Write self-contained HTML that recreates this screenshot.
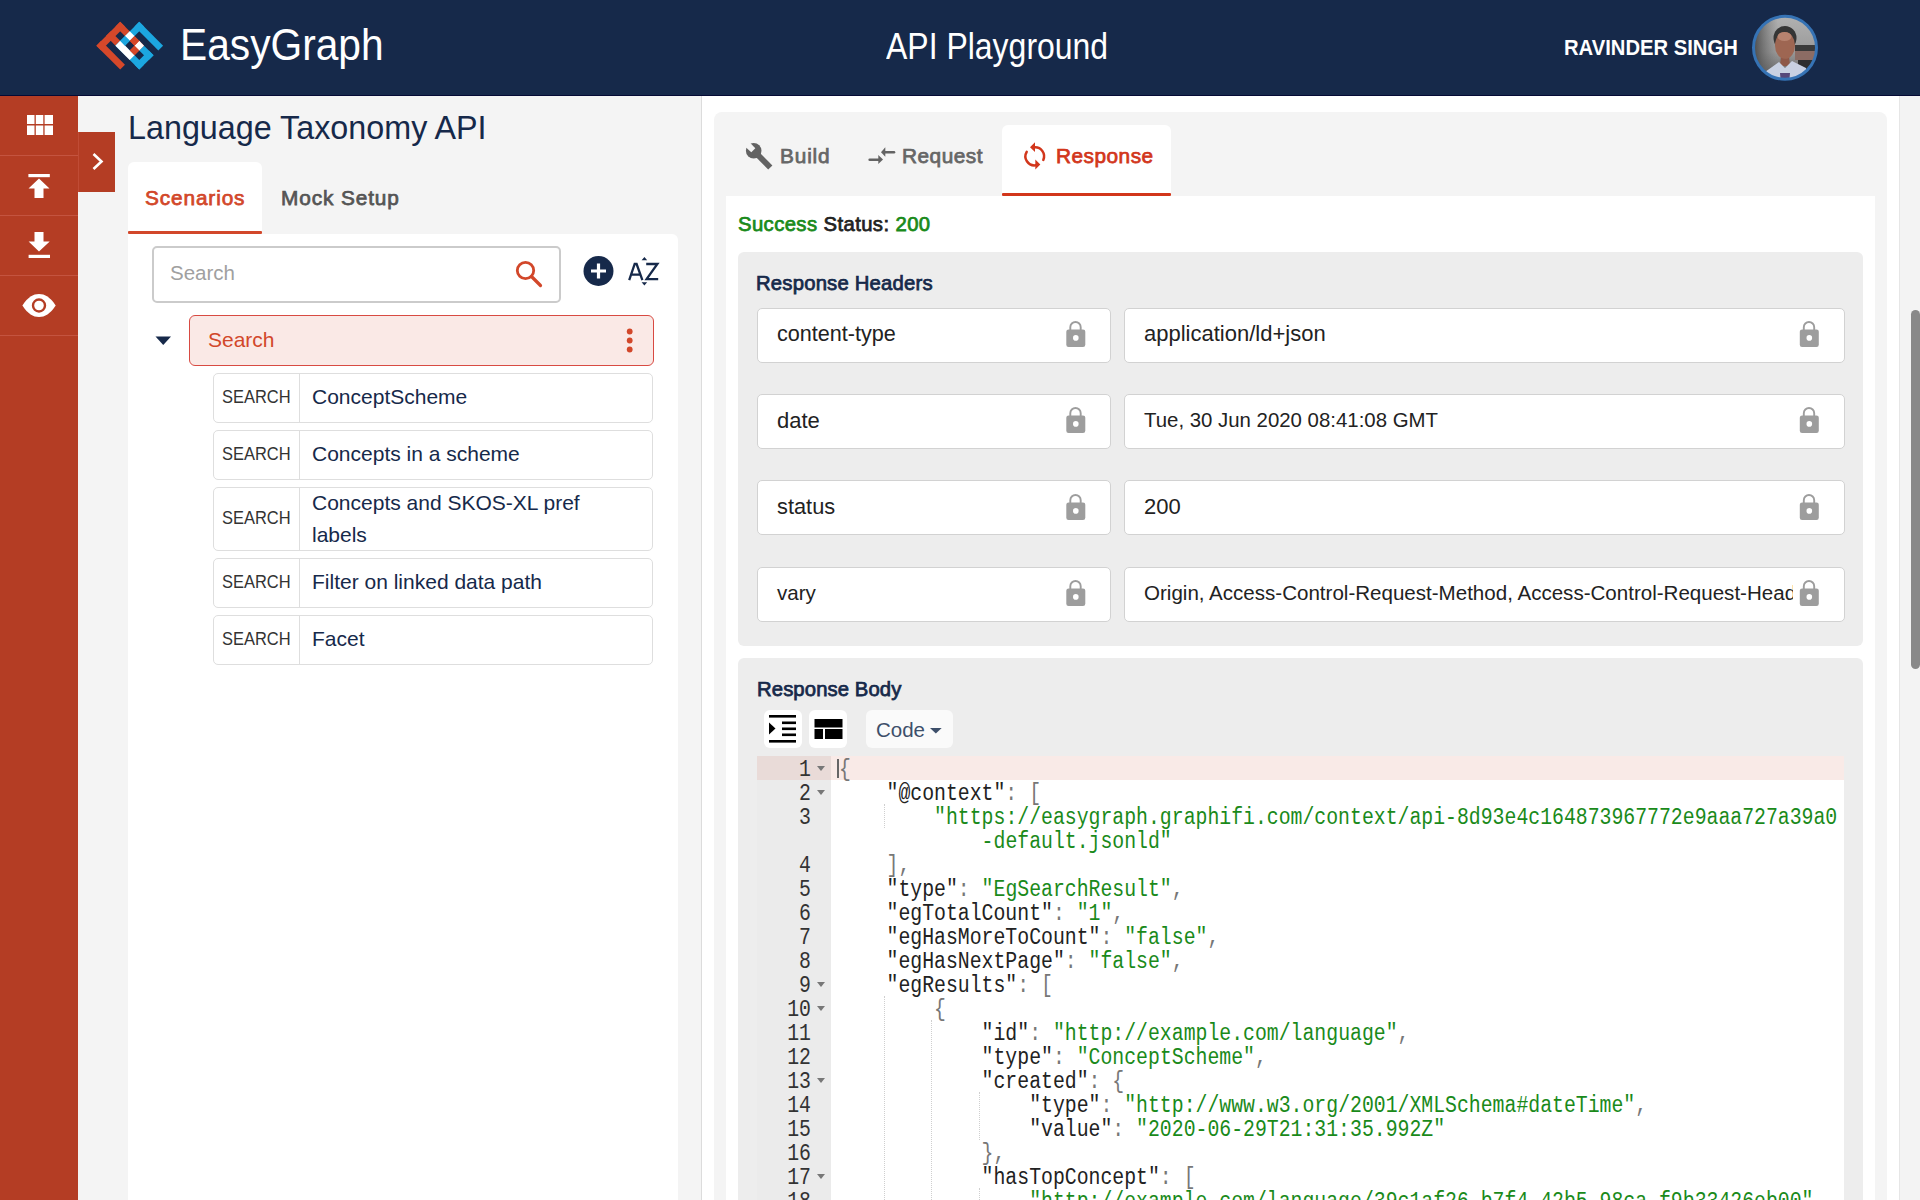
<!DOCTYPE html>
<html><head><meta charset="utf-8">
<style>
*{box-sizing:border-box;margin:0;padding:0}
html,body{width:1920px;height:1200px;overflow:hidden;background:#f4f4f4;font-family:"Liberation Sans",sans-serif}
.abs{position:absolute}
#hdr{left:0;top:0;width:1920px;height:96px;background:#16294a;border-bottom:1px solid #050a35}
#side{left:0;top:96px;width:78px;height:1104px;background:#b43d24}
.sdiv{position:absolute;left:0;width:78px;height:1px;background:#c45440}
#chev{left:78px;top:132px;width:37px;height:60px;background:#b43d24;border-left:1px solid #c04c36}
.txt{position:absolute;white-space:nowrap;line-height:1}
#leftwhite{left:128px;top:234px;width:550px;height:966px;background:#fff;border-top-right-radius:6px}
#scentab{left:128px;top:162px;width:134px;height:72px;background:#fff;border-radius:6px 6px 0 0}
#scenline{left:128px;top:231px;width:134px;height:3.2px;background:#d2472a;border-radius:1px}
#sinput{left:152px;top:246px;width:409px;height:57px;border:2px solid #cbcbcb;border-radius:5px;background:#fff}
#selitem{left:189px;top:315px;width:465px;height:51px;border:1.5px solid #d84a42;border-radius:6px;background:#fae9e6}
.row{position:absolute;left:213px;width:440px;border:1.5px solid #dedede;border-radius:5px;background:#fff}
.row .m{position:absolute;left:0;top:0;bottom:0;width:86px;border-right:1.5px solid #dedede}
.row .m span{position:absolute;left:8px;font-size:17.5px;color:#333;line-height:1;transform:scaleX(0.94);transform-origin:0 0}
.row .n{position:absolute;left:98px;font-size:21px;color:#16294a;line-height:1}
#vline{left:701px;top:96px;width:1px;height:1104px;background:#dcdcdc}
#right{left:702px;top:96px;width:1197px;height:1104px;background:#fff}
#tabbox{left:714px;top:112px;width:1173px;height:1100px;background:#f4f4f4;border-radius:8px}
#content{left:726px;top:196px;width:1149px;height:1010px;background:#fff}
#resptab{left:1002px;top:125px;width:169px;height:71px;background:#fff;border-radius:6px 6px 0 0}
#respline{left:1002px;top:193px;width:169px;height:3.2px;background:#d2361b;border-radius:1px}
#hbox{left:738px;top:252px;width:1125px;height:394px;background:#ededed;border-radius:6px}
.inp{position:absolute;height:55px;background:#fff;border:1.5px solid #d2d2d2;border-radius:5px}
.inp span{position:absolute;left:19px;top:14.5px;font-size:21px;color:#222;line-height:1}
.inp svg{position:absolute;top:12px}
#bbox{left:738px;top:658px;width:1125px;height:600px;background:#ededed;border-radius:6px}
#scroll{left:1899px;top:96px;width:21px;height:1104px;background:#f3f3f3;border-left:1.5px solid #e6e6e6}
#thumb{left:1911px;top:310px;width:9px;height:359px;background:#898989;border-radius:5px}
.btn{position:absolute;top:710px;width:38px;height:38px;background:#fff;border-radius:6px}
#gutter{left:757px;top:756px;width:74px;height:450px;background:#ebebeb}
#editor{left:831px;top:756px;width:1013px;height:450px;background:#fff}
#active{left:757px;top:756px;width:1087px;height:24px;background:#f9eae7}
#activeg{left:757px;top:756px;width:74px;height:24px;background:#e9dbd8}
.code{position:absolute;left:839px;top:757.6px;font-family:"Liberation Mono",monospace;font-size:23px;line-height:24px;white-space:pre;color:#222;transform:scaleX(0.861);transform-origin:0 0}
.ln{position:absolute;left:757px;top:757.6px;width:54px;text-align:right;font-family:"Liberation Mono",monospace;font-size:23px;line-height:24px;white-space:pre;color:#333;transform:scaleX(0.861);transform-origin:100% 0}
.s{color:#1a8a1a}.p{color:#777}
</style></head><body>
<!-- HEADER -->
<div id="hdr" class="abs"></div>
<svg class="abs" style="left:0;top:0" width="200" height="96" viewBox="0 0 200 96">
 <g transform="translate(120.2,21.8) rotate(45) scale(6.74)">
  <g fill="#d5482a">
   <rect x="0" y="0" width="5" height="1"/>
   <rect x="0" y="0" width="1" height="5"/>
   <rect x="0" y="2" width="5" height="1"/>
   <rect x="0" y="4" width="5" height="1"/>
   <rect x="4" y="0" width="1" height="3"/>
  </g>
  <g fill="#1ca7e0">
   <rect x="2" y="-2" width="5" height="1"/>
   <rect x="6" y="0" width="1" height="3"/>
   <rect x="2" y="-2" width="1" height="5"/>
   <rect x="5" y="0" width="2" height="1"/>
   <rect x="2" y="2" width="5" height="1"/>
  </g>
  <g fill="#ffffff">
   <rect x="2" y="0" width="1" height="1"/>
   <rect x="4" y="0" width="1" height="1"/>
   <rect x="2" y="2" width="3" height="1"/>
  </g>
  <rect x="3" y="0" width="1" height="1" fill="#d5482a"/>
  <rect x="4" y="1" width="1" height="1" fill="#d5482a"/>
  <rect x="2" y="1" width="1" height="1" fill="#1ca7e0"/>
 </g>
</svg>
<div class="txt" style="left:180px;top:23px;font-size:44px;color:#fff;transform:scaleX(0.925);transform-origin:0 0">EasyGraph</div>
<div class="txt" style="left:885.5px;top:29px;font-size:36px;color:#fff;transform:scaleX(0.888);transform-origin:0 0">API Playground</div>
<div class="txt" style="left:1564px;top:37px;font-size:21.8px;font-weight:bold;color:#fff;transform:scaleX(0.928);transform-origin:0 0">RAVINDER SINGH</div>
<svg class="abs" style="left:1745px;top:8px" width="80" height="80" viewBox="1745 8 80 80">
 <defs><clipPath id="avc"><circle cx="1785" cy="47.8" r="31"/></clipPath>
 <linearGradient id="avbg" x1="0" y1="0" x2="0" y2="1"><stop offset="0" stop-color="#b4b4b4"/><stop offset="0.55" stop-color="#9a9a9a"/><stop offset="1" stop-color="#555"/></linearGradient>
 <linearGradient id="avl" x1="0" y1="0" x2="1" y2="0"><stop offset="0" stop-color="#3a3a3a"/><stop offset="1" stop-color="#6a6a6a" stop-opacity="0"/></linearGradient></defs>
 <g clip-path="url(#avc)">
  <rect x="1750" y="12" width="72" height="72" fill="url(#avbg)"/>
  <rect x="1750" y="12" width="28" height="72" fill="url(#avl)"/>
  <rect x="1795" y="45" width="27" height="6" fill="#3a3a3a"/>
  <rect x="1795" y="51" width="27" height="9" fill="#8c6c64"/>
  <rect x="1798" y="60" width="24" height="10" fill="#2e2e2e"/>
  <ellipse cx="1785" cy="38" rx="11.5" ry="12" fill="#353535"/>
  <path d="M1781 56 L1789 56 L1790 66 L1780 66 Z" fill="#8e5848"/>
  <ellipse cx="1785" cy="45.5" rx="10" ry="13.3" fill="#9e6652"/>
  <ellipse cx="1784.5" cy="36.5" rx="7" ry="4.5" fill="#b7836f"/>
  <path d="M1763 84 L1765 72 L1779 62 L1785 68 L1792 61 L1806 68 L1811 84 Z" fill="#c9d1e2"/>
  <path d="M1780 73 L1790 73 L1789 84 L1781 84 Z" fill="#56487a"/>
 </g>
 <circle cx="1785" cy="47.8" r="31.5" fill="none" stroke="#3673b5" stroke-width="3"/>
</svg>

<!-- SIDEBAR -->
<div id="side" class="abs"></div>
<div class="sdiv" style="top:155px"></div>
<div class="sdiv" style="top:215px"></div>
<div class="sdiv" style="top:275px"></div>
<div class="sdiv" style="top:335px"></div>
<svg class="abs" style="left:0;top:96px" width="78" height="240" viewBox="0 96 78 240">
 <g fill="#fff">
  <rect x="27" y="115" width="7.5" height="9"/><rect x="35.8" y="115" width="7.5" height="9"/><rect x="44.6" y="115" width="8.4" height="9"/>
  <rect x="27" y="125.5" width="7.5" height="9.5"/><rect x="35.8" y="125.5" width="7.5" height="9.5"/><rect x="44.6" y="125.5" width="8.4" height="9.5"/>
  <rect x="28.4" y="174" width="21.4" height="3.2"/>
  <path d="M39 178.5 L49.5 188.5 L43.5 188.5 L43.5 198 L34.5 198 L34.5 188.5 L28.5 188.5 Z"/>
  <path d="M34.5 232 L43.5 232 L43.5 241.5 L49.7 241.5 L39 251.5 L28.6 241.5 L34.5 241.5 Z"/>
  <rect x="28.6" y="254.8" width="21.4" height="3.2"/>
  <path d="M22.4 305.5 C28 297 33 294 39 294 C45 294 50 297 55.7 305.5 C50 314 45 317 39 317 C33 317 28 314 22.4 305.5 Z"/>
 </g>
 <circle cx="39" cy="305.5" r="6" fill="none" stroke="#b43d24" stroke-width="2.4"/>
</svg>
<div id="chev" class="abs"></div>
<svg class="abs" style="left:78px;top:132px" width="37" height="60" viewBox="78 132 37 60">
 <path d="M93.5 154 L101.5 161.5 L93.5 169" fill="none" stroke="#fff" stroke-width="2.6"/>
</svg>

<!-- LEFT PANEL -->
<div class="txt" style="left:128px;top:112px;font-size:32.3px;color:#16294a">Language Taxonomy API</div>
<div id="scentab" class="abs"></div>
<div id="leftwhite" class="abs"></div>
<div id="scenline" class="abs"></div>
<div class="txt" style="left:145px;top:187.5px;font-size:20.8px;letter-spacing:0.875px;-webkit-text-stroke:0.75px #d2472a;color:#d2472a">Scenarios</div>
<div class="txt" style="left:281px;top:187.5px;font-size:20.8px;letter-spacing:0.889px;-webkit-text-stroke:0.75px #555;color:#555">Mock Setup</div>
<div id="sinput" class="abs"></div>
<div class="txt" style="left:170px;top:263px;font-size:20.5px;color:#a0a0a0">Search</div>
<svg class="abs" style="left:510px;top:256px" width="36" height="36" viewBox="510 256 36 36">
 <circle cx="525.5" cy="270.5" r="8.2" fill="none" stroke="#d2472a" stroke-width="2.8"/>
 <path d="M531.5 276.5 L540.5 285.5" stroke="#d2472a" stroke-width="3.2" stroke-linecap="round"/>
</svg>
<svg class="abs" style="left:580px;top:250px" width="85" height="40" viewBox="580 250 85 40">
 <circle cx="598.5" cy="271" r="15" fill="#16294a"/>
 <path d="M598.5 263.5 V278.5 M591 271 H606" stroke="#fff" stroke-width="3.2"/>
 <path d="M629.2 280.2 L634.7 264 H636.6 L642.4 280.2 M631.6 274.6 H640.4 M646.2 264 H657.4 L646.6 279.2 H658.2" fill="none" stroke="#16294a" stroke-width="2.3" stroke-linejoin="miter"/>
 <path d="M641.6 260.3 L644.4 257 L647.2 260.3 Z M641.6 282.3 L647.2 282.3 L644.4 285.6 Z" fill="#16294a"/>
</svg>
<svg class="abs" style="left:150px;top:330px" width="26" height="20" viewBox="150 330 26 20">
 <path d="M155.5 336.5 L171 336.5 L163.25 345 Z" fill="#16294a"/>
</svg>
<div id="selitem" class="abs"></div>
<div class="txt" style="left:208px;top:329px;font-size:21px;color:#d2472a">Search</div>
<svg class="abs" style="left:620px;top:325px" width="20" height="32" viewBox="620 325 20 32">
 <circle cx="629.7" cy="331.5" r="2.9" fill="#d2472a"/><circle cx="629.7" cy="340.5" r="2.9" fill="#d2472a"/><circle cx="629.7" cy="349.5" r="2.9" fill="#d2472a"/>
</svg>
<div class="row" style="top:373px;height:50px"><div class="m"><span style="top:14.8px">SEARCH</span></div><span class="n" style="top:11.5px">ConceptScheme</span></div>
<div class="row" style="top:430px;height:50px"><div class="m"><span style="top:14.8px">SEARCH</span></div><span class="n" style="top:11.5px">Concepts in a scheme</span></div>
<div class="row" style="top:487px;height:64px"><div class="m"><span style="top:21.8px">SEARCH</span></div><span class="n" style="top:3.7px">Concepts and SKOS-XL pref</span><span class="n" style="top:35.5px">labels</span></div>
<div class="row" style="top:558px;height:50px"><div class="m"><span style="top:14.8px">SEARCH</span></div><span class="n" style="top:11.5px">Filter on linked data path</span></div>
<div class="row" style="top:615px;height:50px"><div class="m"><span style="top:14.8px">SEARCH</span></div><span class="n" style="top:11.5px">Facet</span></div>

<!-- RIGHT PANEL -->
<div id="vline" class="abs"></div>
<div id="right" class="abs"></div>
<div id="tabbox" class="abs"></div>
<div id="content" class="abs"></div>
<div id="resptab" class="abs"></div>
<div id="respline" class="abs"></div>
<svg class="abs" style="left:738px;top:135px" width="40" height="40" viewBox="738 135 40 40">
 <circle cx="753.7" cy="150.7" r="7.8" fill="#636363"/>
 <path d="M753.7 150.7 L770.3 167.5" stroke="#636363" stroke-width="5.9"/>
 <path d="M746.3 139 L750.3 143 L755.3 148.3 L751.3 152.3 L745.7 147.3 L741.7 143.3 Z" fill="#f4f4f4"/>
</svg>
<div class="txt" style="left:780px;top:146px;font-size:20.8px;letter-spacing:0.85px;-webkit-text-stroke:0.75px #666;color:#666">Build</div>
<svg class="abs" style="left:862px;top:138px" width="40" height="40" viewBox="862 138 40 40">
 <g fill="#636363">
 <path d="M869.7 159.7 H879.5" stroke="#636363" stroke-width="2.6" stroke-linecap="round"/>
 <path d="M878.3 155 L883 159.5 L878.3 164 Z"/>
 <path d="M894 152.2 H884.5" stroke="#636363" stroke-width="2.6" stroke-linecap="round"/>
 <path d="M885.3 147.3 L881 152.3 L885.3 156.7 Z"/>
 </g>
</svg>
<div class="txt" style="left:902px;top:146px;font-size:20.8px;letter-spacing:0.5px;-webkit-text-stroke:0.75px #666;color:#666">Request</div>
<svg class="abs" style="left:1015px;top:135px" width="40" height="40" viewBox="1015 135 40 40">
 <path d="M1034.5 147.3 A9 9 0 0 1 1043.3 159.9" fill="none" stroke="#d2361b" stroke-width="2.5" stroke-linecap="round"/>
 <path d="M1030 147.2 L1035 142.3 L1035 152.1 Z" fill="#d2361b"/>
 <path d="M1026.7 151.8 A9 9 0 0 0 1035.5 165.3" fill="none" stroke="#d2361b" stroke-width="2.5" stroke-linecap="round"/>
 <path d="M1040.3 164.5 L1035.3 159.6 L1035.3 169.4 Z" fill="#d2361b"/>
</svg>
<div class="txt" style="left:1056px;top:146px;font-size:20.8px;letter-spacing:0.5px;-webkit-text-stroke:0.75px #d2361b;color:#d2361b">Response</div>

<div class="txt" style="left:738px;top:214.3px;font-size:20.3px;letter-spacing:0.4px;-webkit-text-stroke:0.75px currentColor;color:#1a8a1a">Success <span style="color:#222">Status:</span> 200</div>

<div id="hbox" class="abs"></div>
<div class="txt" style="left:756px;top:272.5px;font-size:20.3px;letter-spacing:0.2px;-webkit-text-stroke:0.75px #16294a;color:#16294a">Response Headers</div>

<div class="inp" style="left:757px;top:308px;width:354px"><span style="font-size:21.6px;top:14.2px">content-type</span></div>
<div class="inp" style="left:1124px;top:308px;width:721px"><span style="font-size:22px;top:14px">application/ld+json</span></div>
<div class="inp" style="left:757px;top:394px;width:354px"><span style="font-size:22px;top:14.5px">date</span></div>
<div class="inp" style="left:1124px;top:394px;width:721px"><span style="font-size:20.4px;top:15px">Tue, 30 Jun 2020 08:41:08 GMT</span></div>
<div class="inp" style="left:757px;top:480px;width:354px"><span style="font-size:21.8px;top:14.5px">status</span></div>
<div class="inp" style="left:1124px;top:480px;width:721px"><span style="font-size:22px;top:14.5px">200</span></div>
<div class="inp" style="left:757px;top:567px;width:354px"><span style="font-size:20.6px;top:15px">vary</span></div>
<div class="inp" style="left:1124px;top:567px;width:721px;overflow:hidden"><span style="width:649px;overflow:hidden;white-space:nowrap;font-size:20.55px;top:15px">Origin, Access-Control-Request-Method, Access-Control-Request-Headers</span></div>

<svg class="abs" style="left:0;top:0;pointer-events:none" width="1920" height="700" viewBox="0 0 1920 700">
 <defs>
  <g id="lock">
   <path d="M4.8 10 V6.2 A5.2 5.2 0 0 1 15.2 6.2 V10" fill="none" stroke="#9d9d9d" stroke-width="1.9"/>
   <rect x="0.8" y="8.5" width="19" height="17.5" rx="2.3" fill="#9d9d9d"/>
   <circle cx="10.3" cy="16.9" r="2.8" fill="#fff"/>
  </g>
 </defs>
 <use href="#lock" x="1065.5" y="321"/><use href="#lock" x="1799" y="321"/>
 <use href="#lock" x="1065.5" y="407"/><use href="#lock" x="1799" y="407"/>
 <use href="#lock" x="1065.5" y="494"/><use href="#lock" x="1799" y="494"/>
 <use href="#lock" x="1065.5" y="580"/>
  <use href="#lock" x="1799" y="580"/>
</svg>

<div id="bbox" class="abs"></div>
<div class="txt" style="left:757px;top:678.6px;font-size:20.3px;letter-spacing:0.1px;-webkit-text-stroke:0.75px #16294a;color:#16294a">Response Body</div>
<div class="btn" style="left:764px"></div>
<div class="btn" style="left:808.5px"></div>
<div class="btn" style="left:865.5px;width:87px;background:#fafafa"></div>
<svg class="abs" style="left:760px;top:705px" width="200" height="50" viewBox="760 705 200 50">
 <g fill="#000">
  <rect x="769" y="715" width="27" height="2.6"/>
  <rect x="782" y="721.5" width="14" height="2.6"/>
  <rect x="782" y="727.5" width="14" height="2.6"/>
  <rect x="782" y="733.5" width="14" height="2.6"/>
  <rect x="769" y="740" width="27" height="2.6"/>
  <path d="M769 722.5 L775.5 728.5 L769 734.5 Z"/>
  <rect x="814.5" y="719" width="28" height="8.5"/>
  <rect x="814.5" y="729" width="8.5" height="10"/>
  <rect x="825" y="729" width="17.5" height="10"/>
 </g>
 <path d="M930 728 L941.7 728 L935.85 733.5 Z" fill="#3d4f6a"/>
</svg>
<div class="txt" style="left:876px;top:720px;font-size:20.5px;color:#3d4f6a">Code</div>

<div id="gutter" class="abs"></div>
<div id="editor" class="abs"></div>
<div id="active" class="abs"></div>
<div id="activeg" class="abs"></div>
<div class="ln">1
2
3

4
5
6
7
8
9
10
11
12
13
14
15
16
17
18</div>
<svg class="abs" style="left:812px;top:756px" width="16" height="450" viewBox="812 756 16 450">
 <g fill="#777">
  <path d="M817 766 L825 766 L821 771 Z"/>
  <path d="M817 790 L825 790 L821 795 Z"/>
  <path d="M817 982 L825 982 L821 987 Z"/>
  <path d="M817 1006 L825 1006 L821 1011 Z"/>
  <path d="M817 1078 L825 1078 L821 1083 Z"/>
  <path d="M817 1174 L825 1174 L821 1179 Z"/>
 </g>
</svg>
<div class="abs" style="left:884px;top:804px;width:1px;height:24px;border-left:1px dotted #cfcfcf"></div>
<div class="abs" style="left:884px;top:996px;width:1px;height:204px;border-left:1px dotted #cfcfcf"></div>
<div class="abs" style="left:931px;top:1020px;width:1px;height:180px;border-left:1px dotted #cfcfcf"></div>
<div class="abs" style="left:979px;top:1092px;width:1px;height:48px;border-left:1px dotted #cfcfcf"></div>
<div class="abs" style="left:979px;top:1188px;width:1px;height:12px;border-left:1px dotted #cfcfcf"></div>
<div class="abs" style="left:837px;top:759px;width:1.5px;height:19px;background:#666"></div>
<div class="code"><span class="p">{</span>
    "@context"<span class="p">: [</span>
        <span class="s">"https://easygraph.graphifi.com/context/api-8d93e4c164873967772e9aaa727a39a0</span>
            <span class="s">-default.jsonld"</span>
    <span class="p">],</span>
    "type"<span class="p">: </span><span class="s">"EgSearchResult"</span><span class="p">,</span>
    "egTotalCount"<span class="p">: </span><span class="s">"1"</span><span class="p">,</span>
    "egHasMoreToCount"<span class="p">: </span><span class="s">"false"</span><span class="p">,</span>
    "egHasNextPage"<span class="p">: </span><span class="s">"false"</span><span class="p">,</span>
    "egResults"<span class="p">: [</span>
        <span class="p">{</span>
            "id"<span class="p">: </span><span class="s">"http://example.com/language"</span><span class="p">,</span>
            "type"<span class="p">: </span><span class="s">"ConceptScheme"</span><span class="p">,</span>
            "created"<span class="p">: {</span>
                "type"<span class="p">: </span><span class="s">"http://www.w3.org/2001/XMLSchema#dateTime"</span><span class="p">,</span>
                "value"<span class="p">: </span><span class="s">"2020-06-29T21:31:35.992Z"</span>
            <span class="p">},</span>
            "hasTopConcept"<span class="p">: [</span>
                <span class="s">"http://example.com/language/39c1af26-b7f4-42b5-98ca-f9b33426eb00"</span></div>

<div id="scroll" class="abs"></div>
<div id="thumb" class="abs"></div>
</body></html>
